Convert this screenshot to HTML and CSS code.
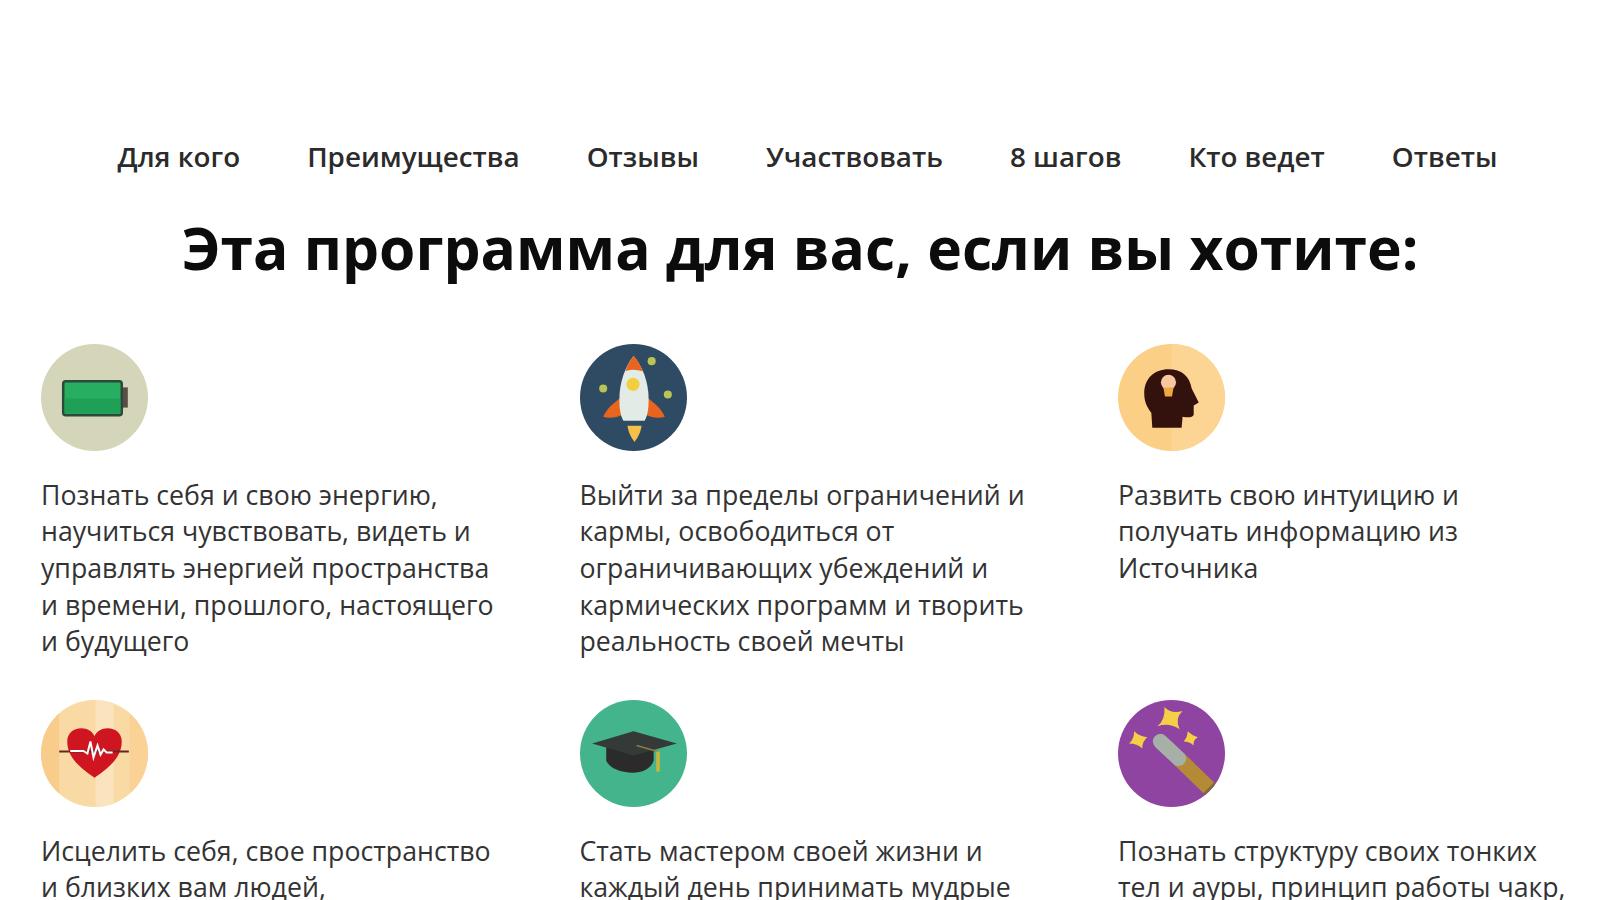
FILE: index.html
```html
<!DOCTYPE html>
<html lang="ru">
<head>
  <meta charset="UTF-8">
  <title>Эта программа для вас</title>
  <link rel="stylesheet" href="styles.css">
</head>
<body>

  <nav class="top-menu">
    <a href="#">Для кого</a>
    <a href="#">Преимущества</a>
    <a href="#">Отзывы</a>
    <a href="#">Участвовать</a>
    <a href="#">8 шагов</a>
    <a href="#">Кто ведет</a>
    <a href="#">Ответы</a>
  </nav>

  <h1>Эта программа для вас, если вы хотите:</h1>

  <div class="benefits">

    <div class="benefit">
      <svg class="icon" viewBox="0 0 106 106">
        <circle cx="53" cy="53" r="53" fill="#d5d6b9"/>
        <rect x="79" y="43" width="7" height="20" fill="#5a4f45"/>
        <rect x="22" y="37" width="58" height="33.500" rx="2.500" fill="#27ae60" stroke="#2c4a3a" stroke-width="2.500"/>
        <rect x="23.500" y="54" width="55" height="15" fill="#20a056"/>
      </svg>
      <p>Познать себя и свою энергию, научиться чувствовать, видеть и управлять энергией пространства и времени, прошлого, настоящего и будущего</p>
    </div>

    <div class="benefit">
      <svg class="icon" viewBox="0 0 106 106">
        <circle cx="53" cy="53" r="53" fill="#2f4a63"/>
        <circle cx="23" cy="44" r="4" fill="#b9c455"/>
        <circle cx="71" cy="17" r="4" fill="#b9c455"/>
        <circle cx="87" cy="50" r="4" fill="#b9c455"/>
        <path d="M41 53 C33 58 26 65 23 72 C29 74 36 73 42 70 Z" fill="#e8641f"/>
        <path d="M66 53 C74 58 81 65 84 72 C78 74 71 73 65 70 Z" fill="#e8641f"/>
        <path d="M47 81 H61 C60 88 57 93 54 97 C51 93 48 88 47 81 Z" fill="#f5c04a"/>
        <path d="M53 12 C62 22 68 38 68 55 C68 64 67 71 64 76 H43 C40 71 39 64 39 55 C39 38 45 22 53 12 Z" fill="#e3ebe6"/>
        <path d="M53 12 C57 16 60 21 62 27 C56 25 50 25 45 27 C47 21 50 16 53 12 Z" fill="#e8641f"/>
        <circle cx="52.500" cy="40" r="6.500" fill="#f2cf3f"/>
      </svg>
      <p>Выйти за пределы ограничений и кармы, освободиться от ограничивающих убеждений и кармических программ и творить реальность своей мечты</p>
    </div>

    <div class="benefit">
      <svg class="icon" viewBox="0 0 106 106">
        <circle cx="53" cy="53" r="53" fill="#fbcf85"/>
        <path d="M53 0 A53 53 0 0 1 53 106 Z" fill="#fcd594"/>
        <path d="M34 83 L33 68 C28 62 26 56 26 49 C26 34 36 25 50 25 C63 25 71 32 73 44 L80 58 L75 61 L75 70 C74 73 69 73 64 72 L63 83 Z" fill="#33110c"/>
        <circle cx="50" cy="38" r="7.500" fill="#f8c6a0"/>
        <path d="M45 43 H55 L53.500 52 H46.500 Z" fill="#eda940"/>
      </svg>
      <p>Развить свою интуицию и получать информацию из Источника</p>
    </div>

    <div class="benefit">
      <svg class="icon" viewBox="0 0 106 106">
        <defs>
          <clipPath id="heartClip"><circle cx="53" cy="53" r="53"/></clipPath>
        </defs>
        <g clip-path="url(#heartClip)">
          <rect width="106" height="106" fill="#f9d9a4"/>
          <rect x="0" width="18" height="106" fill="#f8cd8c"/>
          <rect x="54" width="18" height="106" fill="#fbe3bd"/>
          <rect x="88" width="18" height="106" fill="#fad296"/>
        </g>
        <path d="M53 77 C38 67 26 56 26 41 C26 33 32 28 40 28 C46 28 51 31 53 36 C55 31 60 28 66 28 C74 28 80 33 80 41 C80 56 68 67 53 77 Z" fill="#cf1620"/>
        <path d="M18 51 H87" stroke="#6d2420" stroke-width="2"/>
        <path d="M29 50.500 H42 L46 53 L49 41 L52 57 L56 45 L59 54 L62 49 L65 52 H71" fill="none" stroke="#fff" stroke-width="2"/>
      </svg>
      <p>Исцелить себя, свое пространство и близких вам людей,</p>
    </div>

    <div class="benefit">
      <svg class="icon" viewBox="0 0 106 106">
        <circle cx="53" cy="53" r="53" fill="#44b48c"/>
        <path d="M26 47 V60 C29 68 41 72 52 72 C61 72 70 69 73 60 V47 Z" fill="#2b2b2b"/>
        <path d="M12 43 L53 31 L96 43 L53 55 Z" fill="#333a37"/>
        <path d="M56 45 L77 51" fill="none" stroke="#8d7a4a" stroke-width="1.500"/>
        <rect x="75.500" y="51" width="3.500" height="20" fill="#c9b53c"/>
      </svg>
      <p>Стать мастером своей жизни и каждый день принимать мудрые</p>
    </div>

    <div class="benefit">
      <svg class="icon" viewBox="0 0 106 106">
        <defs>
          <clipPath id="wandClip"><circle cx="53" cy="53" r="53"/></clipPath>
        </defs>
        <circle cx="53" cy="53" r="53" fill="#8e44a0"/>
        <g clip-path="url(#wandClip)" fill="none" stroke-width="15">
          <path d="M60 58 L90 87" stroke="#b48a36"/>
          <path d="M90 87 L96 93" stroke="#7f6a3a"/>
          <path d="M42 41 L60 58" stroke="#a7b0a6" stroke-linecap="round"/>
        </g>
        <path d="M46 7 Q52 14 64 11 Q56 18 61 29 Q51 22 39 26 Q47 20 46 7 Z" fill="#f7cf47"/>
        <path d="M16 31 Q21 36 29 37 Q24 41 24 48 Q19 43 11 43 Q16 39 16 31 Z" fill="#f7cf47"/>
        <path d="M69 31 Q73 35 79 37 Q74 40 75 45 Q71 41 65 41 Q69 37 69 31 Z" fill="#f7cf47"/>
      </svg>
      <p>Познать структуру своих тонких тел и ауры, принцип работы чакр,</p>
    </div>

  </div>

</body>
</html>
```

FILE: styles.css
```css
* {
  box-sizing: border-box;
}

html, body {
  height: 900px;
  overflow: hidden;
}

body {
  margin: 0;
  background: #fff;
  font-family: "Open Sans", "Noto Sans", sans-serif;
  color: #333;
}

.top-menu {
  display: flex;
  justify-content: center;
  gap: 67px;
  padding: 138px 0 0 15px;
}

.top-menu a {
  color: #2b2b2b;
  font-size: 27.800px;
  font-weight: 600;
  line-height: 36px;
  text-decoration: none;
}

h1 {
  margin: 33px 0 0;
  color: #0c0c0c;
  font-size: 58.700px;
  font-weight: 700;
  line-height: 80px;
  text-align: center;
}

.benefits {
  display: grid;
  grid-template-columns: repeat(3, 538.5px);
  padding: 57px 0 0 41px;
}

.benefit {
  width: 460px;
}

.icon {
  display: block;
  width: 107px;
  height: 107px;
  filter: blur(0.5px);
}

.benefit p {
  margin: 25.500px 0 39.500px;
  font-size: 26.700px;
  line-height: 36.700px;
  height: 184px;
}
```
